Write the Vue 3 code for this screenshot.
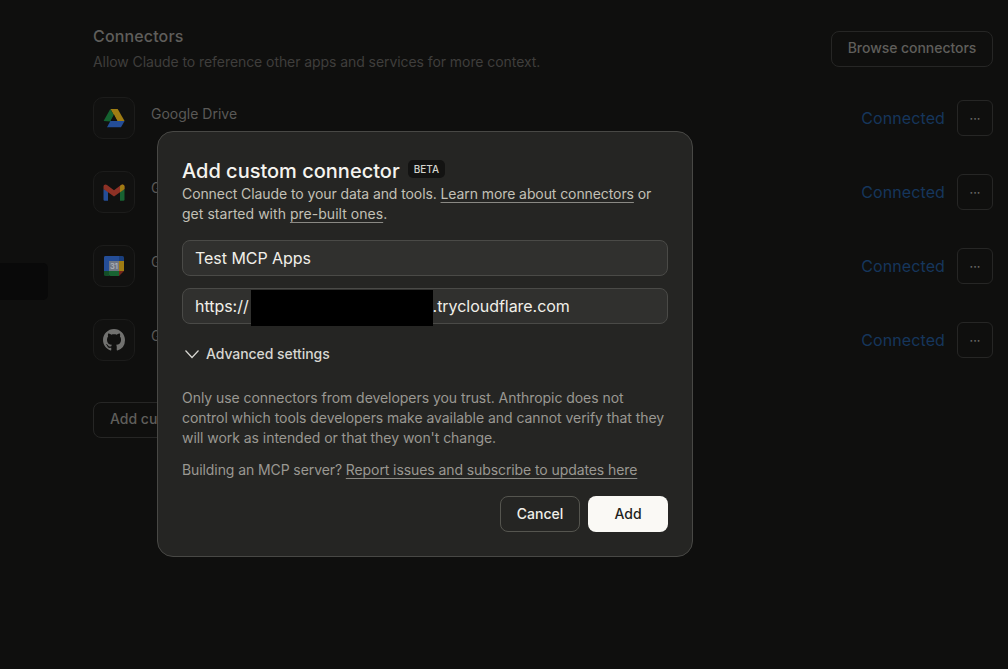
<script setup>
const rows = [
  { id: 'drive', name: 'Google Drive' },
  { id: 'gmail', name: 'Gmail' },
  { id: 'cal', name: 'Google Calendar' },
  { id: 'github', name: 'GitHub' },
]
</script>

<template>
  <div class="page">
    <div class="side-blob"></div>
    <section class="settings">
      <header class="head">
        <div>
          <h2>Connectors</h2>
          <p>Allow Claude to reference other apps and services for more context.</p>
        </div>
        <button class="browse">Browse connectors</button>
      </header>
      <ul class="rows">
        <li v-for="r in rows" :key="r.id" class="row">
          <div class="icon">
            <svg v-if="r.id === 'drive'" width="22" height="20" viewBox="0 0 22 20">
              <path d="M14.700 1 21.600 13h-7.300L7.400 1z" fill="#c79a14" />
              <path d="M0.600 13 7.300 1l3.700 6.300L7.400 13.600z" fill="#17793a" />
              <path d="M7.400 13h14.200l-3.600 6.200H4z" fill="#2a5fbd" />
              <path d="M11 6.500 14.300 13H7.600z" fill="#0e0e0d" />
            </svg>
            <svg v-else-if="r.id === 'gmail'" width="22" height="17" viewBox="0 0 22 17">
              <path d="M0.500 5v10.500A1.200 1.200 0 0 0 1.700 16.700H5V7z" fill="#2a5fbd" />
              <path d="M17 7v9.700h3.300a1.200 1.200 0 0 0 1.200-1.200V5z" fill="#1a7a3c" />
              <path d="M0.500 2.600C.5.800 2.500-.2 4 1l7 5.300 7-5.300c1.500-1.200 3.500-.2 3.500 1.600V5L17 8.200 11 12.600 5 8.200.5 5z" fill="#b03a2b" />
              <path d="M17 2.200 18 1c1.500-1.200 3.500-.2 3.500 1.600V5L17 8.200z" fill="#c79a14" />
            </svg>
            <svg v-else-if="r.id === 'cal'" width="20" height="20" viewBox="0 0 20 20">
              <path d="M1.500 0h13.500v5H5v10H0V1.500A1.500 1.500 0 0 1 1.500 0z" fill="#2a5fbd" />
              <path d="M15 0h3.500A1.500 1.500 0 0 1 20 1.500V5h-5z" fill="#1d4c9c" />
              <path d="M15 5h5v10h-5z" fill="#c79a14" />
              <path d="M5 15h10v5H6.500A1.500 1.500 0 0 1 5 18.500z" fill="#1a7a3c" />
              <path d="M0 15h5v5H1.500A1.500 1.500 0 0 1 0 18.500z" fill="#145f2e" />
              <path d="M15 15h5l-5 5z" fill="#8f2c20" />
              <rect x="5" y="5" width="10" height="10" fill="#8b93a3" />
              <text x="10" y="13" class="cal-num" text-anchor="middle">31</text>
            </svg>
            <svg v-else width="22" height="22" viewBox="0 0 16 16">
              <path fill="#8c8c8a" d="M8 0C3.580 0 0 3.580 0 8c0 3.540 2.290 6.530 5.470 7.590.4.070.55-.17.550-.38 0-.19-.01-.82-.01-1.490-2.010.37-2.530-.49-2.690-.94-.09-.23-.48-.94-.82-1.130-.28-.15-.68-.52-.01-.53.63-.01 1.080.58 1.230.82.720 1.210 1.870.87 2.330.66.070-.52.280-.87.510-1.070-1.780-.2-3.640-.89-3.640-3.950 0-.87.310-1.590.820-2.150-.08-.2-.36-1.020.08-2.120 0 0 .67-.21 2.200.82.640-.18 1.320-.27 2-.27s1.360.09 2 .27c1.530-1.040 2.200-.82 2.200-.82.440 1.100.16 1.920.08 2.120.51.560.82 1.270.82 2.150 0 3.070-1.870 3.750-3.650 3.950.29.250.54.730.54 1.480 0 1.070-.01 1.930-.01 2.200 0 .21.150.46.550.38A8.010 8.010 0 0 0 16 8c0-4.420-3.580-8-8-8z" />
            </svg>
          </div>
          <span class="name">{{ r.name }}</span>
          <span class="status">Connected</span>
          <button class="more">···</button>
        </li>
      </ul>
      <button class="add-custom">Add custom connector</button>
    </section>

    <div class="modal" role="dialog">
      <div class="title-line">
        <h1>Add custom connector</h1>
        <span class="beta">BETA</span>
      </div>
      <p class="intro">
        Connect Claude to your data and tools. <a>Learn more about connectors</a> or<br />
        <span class="second">get started with <a>pre-built ones</a>.</span>
      </p>
      <div class="field">Test MCP Apps</div>
      <div class="field url">
        <span>https://</span><span class="redact"></span><span>.trycloudflare.com</span>
      </div>
      <div class="advanced">
        <svg width="16" height="10" viewBox="0 0 16 10" fill="none">
          <path d="M1.500 1.500 8 8.500l6.500-7" stroke="#d8d7d2" stroke-width="1.200" />
        </svg>
        <span>Advanced settings</span>
      </div>
      <p class="warn">
        Only use connectors from developers you trust. Anthropic does not control which tools developers make available and cannot verify that they will work as intended or that they won't change.
      </p>
      <p class="build">Building an MCP server? <a>Report issues and subscribe to updates here</a></p>
      <div class="actions">
        <button class="cancel">Cancel</button>
        <button class="confirm">Add</button>
      </div>
    </div>
  </div>
</template>

<style>
html, body { margin: 0; background: #0f0f0e; }
</style>

<style scoped>
.page {
  position: relative;
  width: 1008px;
  height: 669px;
  overflow: hidden;
  background: #0f0f0e;
  font-family: Inter, "Noto Sans", sans-serif;
}
.side-blob {
  position: absolute;
  left: -12px;
  top: 263px;
  width: 60px;
  height: 37px;
  border-radius: 5px;
  background: #090909;
}
.settings {
  width: 900px;
  margin-left: 93px;
  padding-top: 27px;
}
.head { display: flex; justify-content: space-between; align-items: flex-start; }
h2 { margin: 0; font-size: 16px; line-height: 19px; font-weight: 500; letter-spacing: .15px; color: #5f5e5b; }
.head p { margin: 6px 0 0; font-size: 14px; line-height: 20px; letter-spacing: -.07px; color: #3f3e3c; }
.browse {
  margin-top: 4px;
  width: 162px;
  height: 36px;
  padding: 0 0 3px;
  background: transparent;
  border: 1px solid #262625;
  border-radius: 8px;
  color: #5f5e5b;
  font: 450 14px Inter, sans-serif;
  letter-spacing: -.05px;
}
.rows { list-style: none; margin: 25px 0 0; padding: 0; display: flex; flex-direction: column; gap: 32px; }
.row { display: flex; align-items: flex-start; height: 42px; }
.icon {
  box-sizing: border-box;
  width: 42px;
  height: 42px;
  border: 1px solid #1c1c1b;
  border-radius: 10px;
  background: #111110;
  display: flex;
  align-items: center;
  justify-content: center;
}
.icon svg { opacity: .78; }
.cal-num { font: 600 7.500px Inter, sans-serif; fill: #d8dce4; }
.name { margin: 8px 0 0 16px; font-size: 14px; line-height: 18px; color: #5a5957; }
.status { margin: 11px 0 0 auto; font-size: 16px; line-height: 20px; letter-spacing: .1px; color: #16365c; }
.more {
  margin: 3px 0 0 12px;
  width: 36px;
  height: 36px;
  padding: 0;
  background: transparent;
  border: 1px solid #262625;
  border-radius: 6px;
  color: #6a6966;
  font: 500 12px Inter, sans-serif;
}
.add-custom {
  margin-top: 41px;
  width: 180px;
  height: 36px;
  padding: 0 0 3px 16px;
  text-align: left;
  background: transparent;
  border: 1px solid #262625;
  border-radius: 8px;
  color: #5f5e5b;
  font: 450 14px Inter, sans-serif;
}
.modal {
  position: absolute;
  left: 157px;
  top: 131px;
  width: 536px;
  height: 426px;
  box-sizing: border-box;
  padding: 24px 24px 0;
  background: #252523;
  border: 1px solid #484845;
  border-radius: 16px;
}
.title-line { display: flex; align-items: center; gap: 8px; height: 28px; }
h1 { margin: 0; padding-top: 1px; font-size: 20px; line-height: 28px; font-weight: 500; color: #f5f4ef; }
.beta {
  margin-top: -2px;
  padding: 0 6px;
  height: 18px;
  line-height: 18px;
  border-radius: 5px;
  background: #131312;
  color: #d4d3ce;
  font-size: 10px;
  font-weight: 500;
}
.intro, .warn, .build { margin: 0; font-size: 14px; line-height: 20px; letter-spacing: -.09px; }
.intro { color: #c2c0b6; }
.second { letter-spacing: .03px; }
a { text-decoration: underline; text-decoration-thickness: 1px; text-underline-offset: 3px; text-decoration-color: #8a8984; }
.field {
  box-sizing: border-box;
  height: 36px;
  margin-top: 16px;
  padding: 0 12px;
  display: flex;
  align-items: center;
  background: #30302e;
  border: 1px solid #4a4a47;
  border-radius: 8px;
  color: #f0efe9;
  font-size: 16px;
  letter-spacing: -.04px;
}
.field + .field { margin-top: 12px; }
.redact {
  flex: none;
  width: 182px;
  height: 36px;
  background: #000;
  margin: 2px 0 -2px 2px;
}
.advanced { display: flex; align-items: center; gap: 6px; margin: 20px 0 0 2px; font-size: 14px; line-height: 20px; letter-spacing: -.06px; color: #d8d7d2; font-weight: 450; }
.warn { margin-top: 24px; color: #9a9892; letter-spacing: -.05px; }
.build { margin-top: 12px; color: #9a9892; }
.actions { display: flex; justify-content: flex-end; gap: 8px; margin-top: 16px; }
.actions button { width: 80px; height: 36px; padding: 0 0 1px; border-radius: 8px; font: 450 14px Inter, sans-serif; }
.cancel { background: transparent; border: 1px solid #55554f; color: #f0efe9; }
.confirm { background: #faf9f5; border: 0; color: #1f1f1d; }
</style>
